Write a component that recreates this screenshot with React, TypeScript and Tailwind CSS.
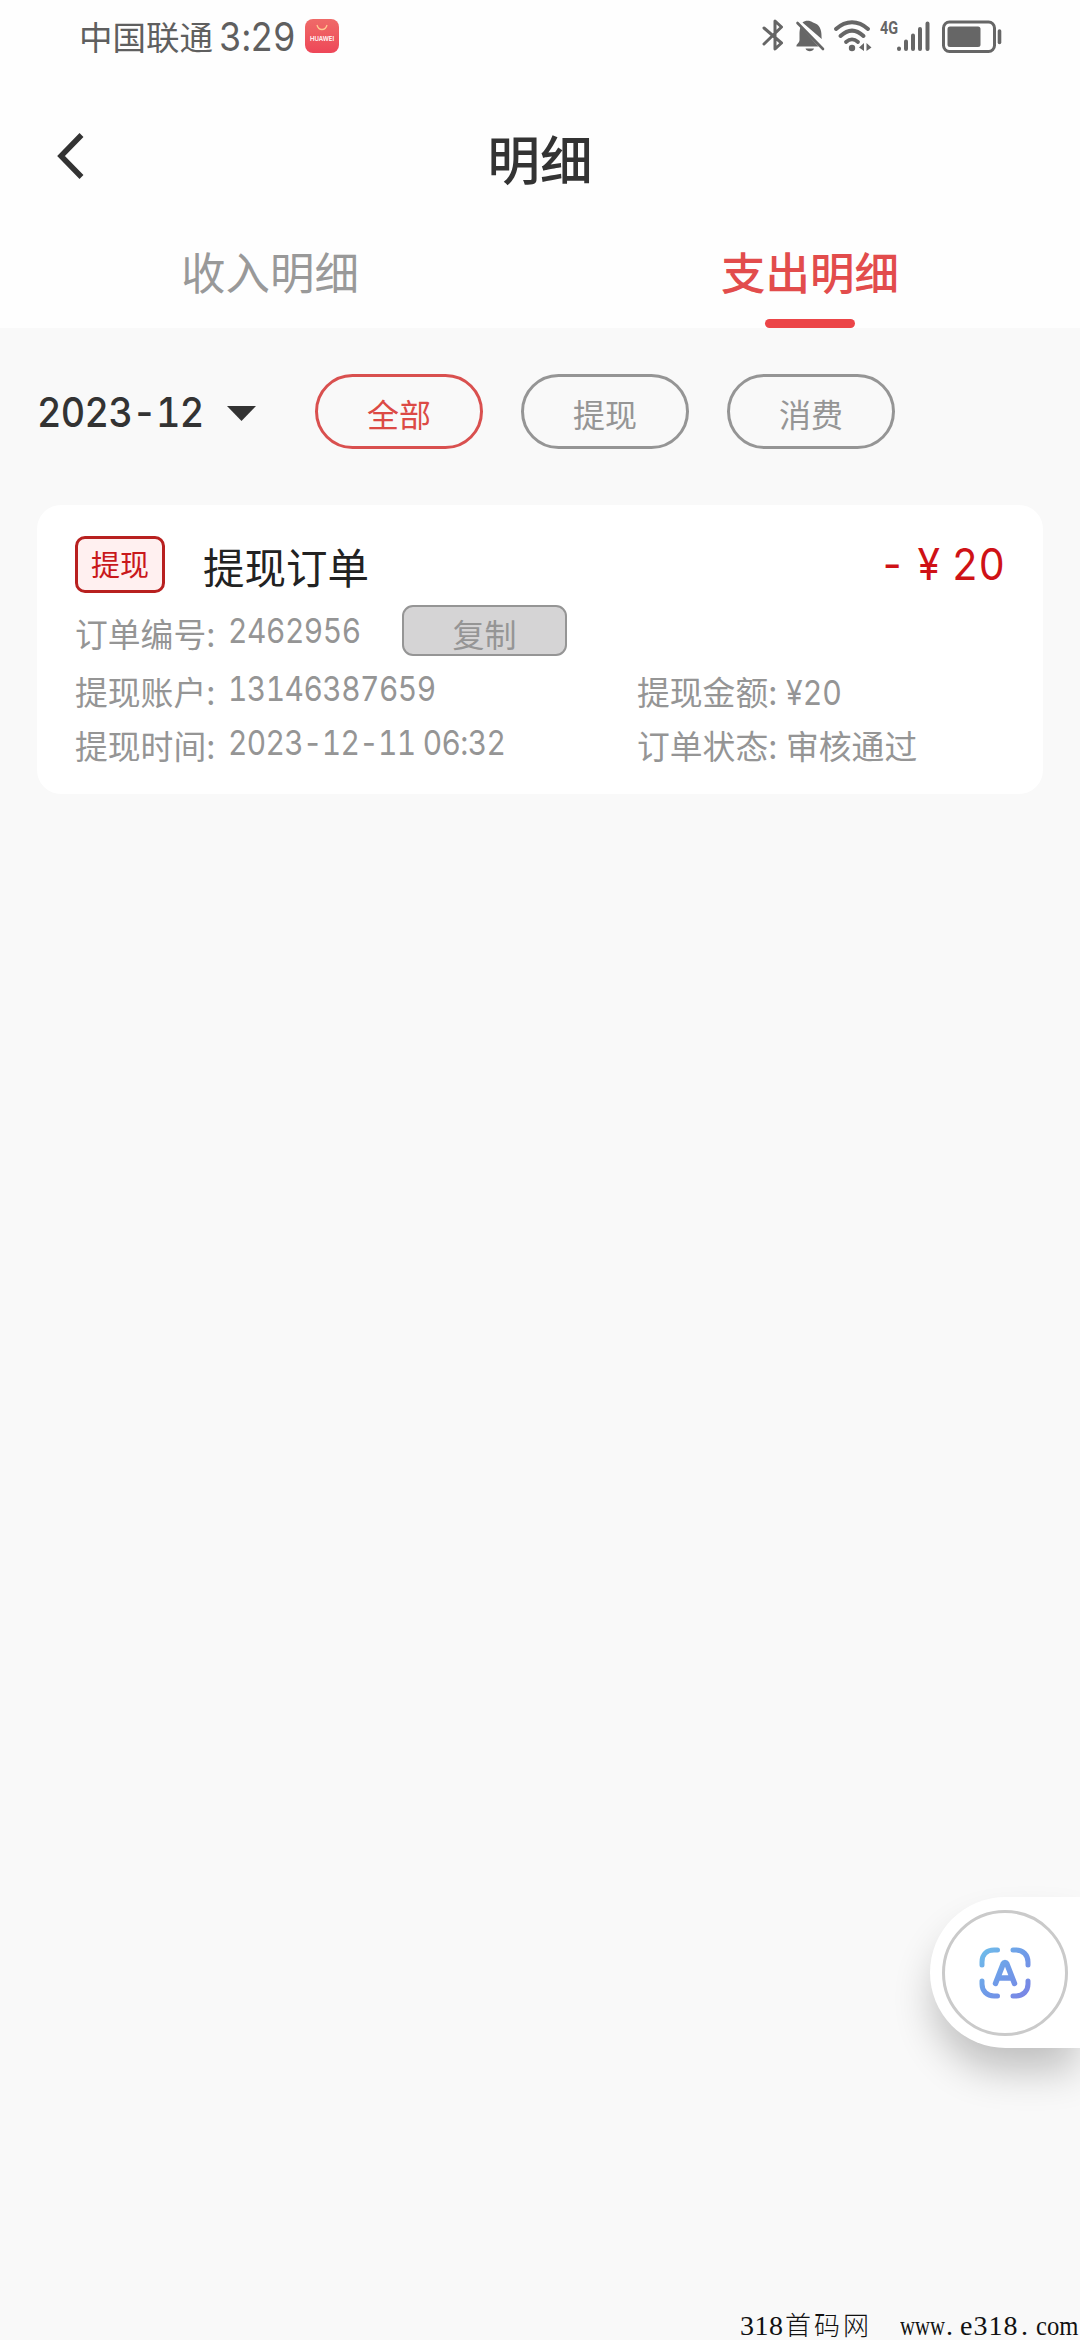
import type { ReactNode } from "react";

function Digits({ children, className = "scale-x-[0.89]" }: { children: ReactNode; className?: string }) {
  return (
    <span
      className={`inline-block origin-left whitespace-pre font-['Inter','Noto_Sans_CJK_SC',sans-serif] tabular-nums [font-variant-ligatures:no-contextual] ${className}`}
    >
      {children}
    </span>
  );
}

function StatusIcons() {
  return (
    <svg width="250" height="40" viewBox="0 0 250 40" fill="none" stroke="#666" className="block">
      {/* bluetooth */}
      <path d="M4 12 L21.500 27 L15 33 V5 L21.500 11 L4 28" strokeWidth="3" strokeLinejoin="round" strokeLinecap="round" />
      {/* muted bell */}
      <path d="M42.500 6.500 C45 4 50 4 53 6.500 C60 8.500 61.500 14 61.500 20.500 L61.700 23 Z" fill="#666" stroke="none" />
      <path d="M40.500 11 L58.500 30.500 H36.500 C36 28 39.500 27 39.500 24 V18 C39.500 15 39.800 13 40.500 11 Z" fill="#666" stroke="none" />
      <path d="M45.500 32.500 H54 C53 36 46.500 36 45.500 32.500 Z" fill="#666" stroke="none" />
      <path d="M37.500 7 L63 33" strokeWidth="2.600" strokeLinecap="round" />
      {/* wifi */}
      <path d="M76 13 C86 4 98 4 108 13" strokeWidth="4" strokeLinecap="round" />
      <path d="M80.500 20 C88 13 96 13 103.500 20" strokeWidth="4" strokeLinecap="round" />
      <path d="M86 26 C90 22.500 94 22.500 98 26" strokeWidth="3.800" strokeLinecap="round" />
      <circle cx="92" cy="32" r="3.200" fill="#666" stroke="none" />
      <path d="M99 31.500 L104 27 V35 Z M111.500 31.500 L106.500 27 V35 Z" fill="#666" stroke="none" />
      {/* signal */}
      <path d="M139 32.500 V33 M146 25.500 V33 M153 19.500 V33 M160 13 V33 M167.500 7.500 V33" strokeWidth="4" strokeLinecap="round" />
      {/* battery */}
      <rect x="183.500" y="6" width="51" height="29.500" rx="6" strokeWidth="3" />
      <rect x="187.500" y="10.500" width="33" height="20.500" rx="2.500" fill="#666" stroke="none" />
      <path d="M239.500 15 V26.500" strokeWidth="3.600" strokeLinecap="round" />
    </svg>
  );
}

function StatusBar() {
  return (
    <div className="flex h-[76px] items-start justify-between pl-[79px] pr-[70px]">
      <div className="flex h-[76px] items-center text-[#5f5f5f]">
        <span className="-mt-[4px] w-[140px] whitespace-nowrap text-[33.500px]">中国联通</span>
        <Digits className="-mt-[1px] w-[86px] scale-x-[0.91] text-[39px] tracking-[-0.7px]">3:29</Digits>
        <div className="-mt-[4px] flex h-[34px] w-[34px] flex-col items-center rounded-[8px] bg-linear-to-b from-[#ef6a68] to-[#ee4658]">
          <svg width="12" height="7" viewBox="0 0 12 7" fill="none" className="mt-[5px]">
            <path d="M1 1 C2.500 7 9.500 7 11 1" stroke="#ffc98f" strokeWidth="1.300" />
          </svg>
          <span className="mt-[4px] font-['Inter',sans-serif] text-[6px] leading-[8px] font-semibold text-white">HUAWEI</span>
        </div>
      </div>
      <div className="relative mt-[16px] w-[250px]">
        <StatusIcons />
        <span className="absolute top-[2px] left-[120px] origin-left scale-x-[0.8] font-['Roboto',sans-serif] text-[18px] leading-[20px] font-bold text-[#666]">
          4G
        </span>
      </div>
    </div>
  );
}

function Pill({ label, active = false }: { label: string; active?: boolean }) {
  return (
    <button
      className={`flex h-[75px] w-[168px] items-center justify-center rounded-full border-[3px] pt-[3px] text-[32px] leading-[40px] ${
        active ? "border-[#d9504f] text-[#dc4a45]" : "border-[#959595] text-[#959595]"
      }`}
    >
      {label}
    </button>
  );
}

function OrderCard() {
  return (
    <section className="mx-[37px] mt-[56px] flex h-[289px] flex-col rounded-[24px] bg-white pr-[38px] pl-[38px] text-[#959595]">
      <div className="mt-[31px] flex h-[57px] items-center">
        <span className="flex h-[57px] w-[90px] items-center justify-center rounded-[10px] border-[3px] border-[#b8201f] bg-[#fff0f0] pb-[3px] text-[29px] leading-[40px] text-[#c9181b]">
          提现
        </span>
        <h2 className="mt-[3px] ml-[38px] text-[41.500px] leading-[56px] text-[#222]">提现订单</h2>
        <span className="ml-auto flex h-[57px] w-[126px] text-[#cf1216]">
          <Digits className="scale-x-[0.93] text-[44px] leading-[57px] [word-spacing:1px]">- ¥ 20</Digits>
        </span>
      </div>
      <div className="mt-[12px] flex h-[51px] items-center">
        <span className="mt-[5px] w-[153px] text-[32.800px] leading-[40px]">订单编号:</span>
        <Digits className="w-[174px] scale-x-[0.88] text-[34px] leading-[49px] tracking-[-0.5px]">2462956</Digits>
        <button className="flex h-[51px] w-[165px] items-center justify-center rounded-[11px] border-2 border-[#959595] bg-[#d5d4d5] pt-[5px] text-[32px] leading-[40px]">
          复制
        </button>
      </div>
      <div className="mt-[7px] flex h-[54px] items-center">
        <span className="mt-[2px] w-[153px] text-[32.800px] leading-[40px]">提现账户:</span>
        <Digits className="-mt-[2px] w-[409px] scale-x-[0.88] text-[34px] leading-[54px] tracking-[-0.6px]">13146387659</Digits>
        <span className="mt-[2px] w-[149px] text-[32.800px] leading-[40px]">提现金额:</span>
        <Digits className="mt-[6px] scale-x-[0.89] text-[34px] leading-[54px]">¥20</Digits>
      </div>
      <div className="flex h-[54px] items-center">
        <span className="mt-[2px] w-[153px] text-[32.800px] leading-[40px]">提现时间:</span>
        <Digits className="-mt-[2px] w-[409px] scale-x-[0.88] text-[34px] leading-[54px] tracking-[-0.75px]">2023-12-11 06:32</Digits>
        <span className="mt-[2px] w-[149px] text-[32.800px] leading-[40px]">订单状态:</span>
        <span className="mt-[2px] text-[32.800px] leading-[40px]">审核通过</span>
      </div>
    </section>
  );
}

function ScanButton() {
  return (
    <div className="absolute top-[1897px] right-0 flex h-[151px] w-[150px] items-center rounded-l-full bg-white pl-[12px] shadow-[0_26px_40px_-4px_rgba(0,0,0,0.24)]">
      <div className="relative flex h-[126px] w-[126px] items-center justify-center rounded-full border-[3px] border-[#cacaca]">
        <svg width="52" height="52" viewBox="0 0 52 52" fill="none" strokeLinecap="round" strokeLinejoin="round">
          <defs>
            <linearGradient id="scan" x1="0" y1="0" x2="52" y2="52" gradientUnits="userSpaceOnUse">
              <stop stopColor="#6fc0ea" />
              <stop offset="0.5" stopColor="#6f9be8" />
              <stop offset="1" stopColor="#7b82e4" />
            </linearGradient>
          </defs>
          <path
            d="M3 18 V15 C3 7 8 3 15 3 H18.500 M34 3 H37 C44 3 49 8 49 15 V18 M49 34 V37 C49 44 44 49 37 49 H34 M18.500 49 H15 C8 49 3 44 3 37 V34"
            stroke="url(#scan)"
            strokeWidth="5"
          />
          <path d="M16.500 36.500 L24.300 16.500 C25 15 27 15 27.700 16.500 L35.500 36.500 M20 31 H32" stroke="url(#scan)" strokeWidth="5.500" />
        </svg>
      </div>
    </div>
  );
}

function Watermark() {
  return (
    <footer className="absolute top-[2308px] left-[740px] flex h-[32px] w-[340px] whitespace-pre font-['Liberation_Serif','Noto_Sans_CJK_SC',serif] text-[28px] leading-[36px] text-[#111]">
      <span className="w-[45px] tracking-[0.5px]">318</span>
      <span className="w-[115px] font-['Noto_Sans_CJK_SC',sans-serif] text-[26px] leading-[32px] font-light tracking-[3px]">首码网</span>
      <span className="w-[45px] origin-left scale-x-[0.74]">www</span>
      <span className="w-[15px] pl-[1px]">.</span>
      <span className="w-[61px] tracking-[1px]">e318</span>
      <span className="w-[15px]">.</span>
      <span className="w-[43px] origin-left scale-x-[0.88]">com</span>
    </footer>
  );
}

export default function App() {
  return (
    <div className="relative h-[2340px] w-[1080px] overflow-hidden bg-[#f9f9f9] font-['Noto_Sans_CJK_SC',sans-serif]">
      <header className="h-[328px] bg-[#fefefe]">
        <StatusBar />
        <div className="grid h-[160px] grid-cols-3 items-center">
          <button className="pl-[56px]" aria-label="返回">
            <svg width="30" height="46" viewBox="0 0 30 46" fill="none">
              <path d="M25.500 2 L5 23 L25.500 44" stroke="#333" strokeWidth="5.500" />
            </svg>
          </button>
          <h1 className="mt-[2px] text-center text-[52.500px] leading-[70px] font-medium text-[#333]">明细</h1>
        </div>
        <nav className="grid h-[92px] grid-cols-2 text-center text-[44.500px] leading-[69px]">
          <button className="flex justify-center text-[#999]">收入明细</button>
          <button className="flex flex-col items-center font-medium text-[#e24c4c]">
            <span>支出明细</span>
            <span className="mt-[14px] h-[9px] w-[90px] rounded-full bg-[#ec4548]" />
          </button>
        </nav>
      </header>
      <div className="mt-[46px] flex h-[75px] items-center pl-[37px]">
        <Digits className="mt-[2px] w-[190px] scale-x-[0.92] text-[41px] font-medium tracking-[-0.7px] text-[#333]">2023-12</Digits>
        <svg width="29" height="15" viewBox="0 0 29 15" className="mt-[3px] mr-[59px]">
          <path d="M0 0 H29 L14.500 15 Z" fill="#333" />
        </svg>
        <div className="flex gap-[38px]">
          <Pill label="全部" active />
          <Pill label="提现" />
          <Pill label="消费" />
        </div>
      </div>
      <OrderCard />
      <ScanButton />
      <Watermark />
    </div>
  );
}
